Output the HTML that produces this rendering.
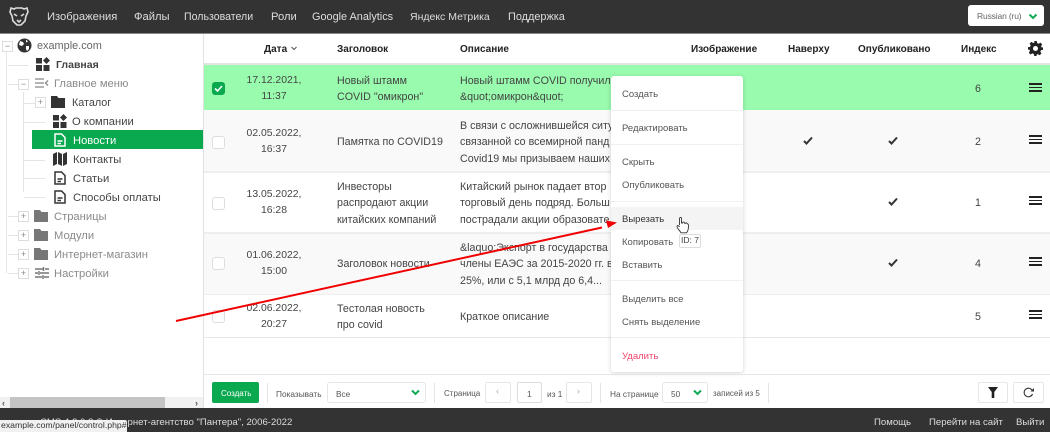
<!DOCTYPE html>
<html lang="ru"><head><meta charset="utf-8"><title>Панель</title>
<style>
html,body{margin:0;padding:0;background:#fff}
#p{position:relative;width:1050px;height:432px;overflow:hidden;background:#fff;font:11px/16px "Liberation Sans","Noto Sans CJK SC",sans-serif;color:#444}
#p div,#p span.a,#p svg{position:absolute}
.t{position:absolute;white-space:nowrap;line-height:16px}
.n{color:#ddd;font-size:11.2px;top:9px}
.h{font-weight:bold;color:#222;font-size:10px;top:42px}
.m{font-size:11.2px;color:#444}
.g{color:#8a8a8a;font-size:11.2px}
.d{font-size:10.4px;color:#444;width:80px;text-align:center;left:234px;line-height:16px;white-space:nowrap;margin-top:1px}
.c{font-size:10.7px;color:#444;white-space:nowrap;line-height:16.4px;margin-top:1px}
.cb{width:11px;height:11px;border:1px solid #ddd;border-radius:3px;background:#fff;left:212px}
.ln{background:#ddd}
.pm{width:9px;height:9px;border:1px solid #ddd;background:#fff;color:#888;font-size:9px;line-height:9px;text-align:center}
.b{height:3px;width:13px;left:1029px}
.b i{display:block;height:1.5px;background:#222;margin-bottom:2px;width:13px}
.mi{left:622px;font-size:9.5px;color:#555;white-space:nowrap;line-height:16px;margin-top:1px}
.sp{left:611px;width:132px;height:1px;background:#f0f0f0}
.sm{font-size:8.3px;color:#555;white-space:nowrap;line-height:14px;top:387px}
.bx{border:1px solid #e6e6e6;border-radius:2px;background:#fff;box-sizing:border-box}
.vs{width:1px;height:20px;top:383px;background:#e4e4e4}
</style></head><body><div id="p">

<div style="left:0;top:0;width:1050px;height:33px;background:#333"></div>
<div style="left:0;top:33px;width:1050px;height:1px;background:#888"></div>
<svg style="left:8px;top:6px" width="22" height="20" viewBox="0 0 22 20"><path d="M3 2l3 1 2-1h6l2 1 3-1 1 4-2 4-1 5-4 4h-4l-4-4-1-5-2-4z" fill="none" stroke="#ddd" stroke-width="1.6"/><path d="M6 8l3 2M16 8l-3 2M9 14l2 2 2-2" stroke="#ddd" stroke-width="1.6" fill="none"/></svg>
<span class="t n" style="left:47px">Изображения</span>
<span class="t n" style="left:134px">Файлы</span>
<span class="t n" style="left:184px;font-size:10.6px">Пользователи</span>
<span class="t n" style="left:271px">Роли</span>
<span class="t n" style="left:312px;font-size:10.9px">Google Analytics</span>
<span class="t n" style="left:410px;font-size:10.5px">Яндекс Метрика</span>
<span class="t n" style="left:508px;font-size:10.9px">Поддержка</span>
<div style="left:968px;top:5px;width:76px;height:21px;background:#fff;border-radius:3px"></div>
<span class="t" style="left:977px;top:8px;font-size:8.5px;letter-spacing:-.15px;color:#666">Russian (ru)</span>
<svg style="left:1028px;top:13px" width="10" height="7" viewBox="0 0 10 7"><path d="M1.500 1.500L5 5l3.500-3.500" stroke="#0fa958" stroke-width="2" fill="none"/></svg>

<!-- tree -->
<div style="left:203px;top:34px;width:1px;height:374px;background:#e2e2e2"></div>
<div class="ln" style="left:6px;top:52px;width:1px;height:80px;background:#e4e4e4"></div>
<div class="ln" style="left:6px;top:132px;width:1px;height:141px;background:#e4e4e4"></div>
<div class="ln" style="left:23px;top:92px;width:1px;height:100px;background:#e4e4e4"></div>
<div style="left:8px;top:65px;width:20px;height:1px;background:#e4e4e4"></div>
<div style="left:8px;top:84px;width:12px;height:1px;background:#e4e4e4"></div>
<div style="left:24px;top:103px;width:12px;height:1px;background:#e4e4e4"></div>
<div style="left:24px;top:122px;width:21px;height:1px;background:#e4e4e4"></div>
<div style="left:24px;top:160px;width:21px;height:1px;background:#e4e4e4"></div>
<div style="left:24px;top:178px;width:21px;height:1px;background:#e4e4e4"></div>
<div style="left:24px;top:197px;width:21px;height:1px;background:#e4e4e4"></div>
<div style="left:8px;top:216px;width:12px;height:1px;background:#e4e4e4"></div>
<div style="left:8px;top:235px;width:12px;height:1px;background:#e4e4e4"></div>
<div style="left:8px;top:254px;width:12px;height:1px;background:#e4e4e4"></div>
<div style="left:8px;top:273px;width:12px;height:1px;background:#e4e4e4"></div>
<div class="pm" style="left:2px;top:41px">−</div>
<div class="pm" style="left:18px;top:79px">−</div>
<div class="pm" style="left:35px;top:97px">+</div>
<div class="pm" style="left:18px;top:211px">+</div>
<div class="pm" style="left:18px;top:230px">+</div>
<div class="pm" style="left:18px;top:249px">+</div>
<div class="pm" style="left:18px;top:268px">+</div>

<svg style="left:17px;top:38px" width="15" height="15" viewBox="0 0 15 15"><circle cx="7.500" cy="7.500" r="7" fill="#333"/><path d="M3 3l3 1 1 2-2 2-3-1zM9 1.500l2 2-2 1zM9 8l3 0 0 3-2 2-1-2z" fill="#fff"/></svg>
<span class="t" style="left:37px;top:38px;font-size:10.9px;color:#666">example.com</span>

<svg style="left:36px;top:57px" width="14" height="14" viewBox="0 0 14 14" fill="#333"><path d="M0 1h6v5.500H0zM0 8h6v6H0zM7.500 8h6v6h-6zM10.500 0l3.500 3.500-3.500 3.500L7 3.500z"/></svg>
<span class="t" style="left:56px;top:57px;font-size:10.5px;font-weight:bold;color:#444">Главная</span>

<svg style="left:35px;top:77px" width="14" height="13" viewBox="0 0 14 13" stroke="#888" fill="none" stroke-width="1.300"><path d="M0 2h9M0 6h9M0 10h9M13 3.500L10.500 6l2.500 2.500"/></svg>
<span class="t g" style="left:54px;top:76px">Главное меню</span>

<svg style="left:51px;top:96px" width="14" height="12" viewBox="0 0 14 12" fill="#333"><path d="M0 0h6l1.500 2H14v10H0z"/></svg>
<span class="t m" style="left:72px;top:95px;font-size:10.8px">Каталог</span>

<svg style="left:53px;top:114px" width="14" height="14" viewBox="0 0 14 14" fill="#333"><path d="M0 1h6v5.500H0zM0 8h6v6H0zM7.500 8h6v6h-6zM10.500 0l3.500 3.500-3.500 3.500L7 3.500z"/></svg>
<span class="t m" style="left:72px;top:114px">О компании</span>

<div style="left:32px;top:130px;width:171px;height:19px;background:#0aa84f"></div>
<svg style="left:54px;top:133px" width="12" height="14" viewBox="0 0 12 14" fill="none" stroke="#fff" stroke-width="1.500"><path d="M1 1h6.500L11 4.500V13H1zM3.500 8h5M3.500 10.500h3.500"/></svg>
<span class="t m" style="left:73px;top:133px;color:#fff">Новости</span>

<svg style="left:53px;top:152px" width="14" height="14" viewBox="0 0 14 14" fill="#333"><path d="M0 2l4-2v12l-4 2zM5 0l4 2v12l-4-2zM10 2l4-2v12l-4 2z"/></svg>
<span class="t m" style="left:73px;top:152px">Контакты</span>
<svg style="left:54px;top:171px" width="12" height="14" viewBox="0 0 12 14" fill="none" stroke="#333" stroke-width="1.500"><path d="M1 1h6.500L11 4.500V13H1zM3.500 8h5M3.500 10.500h3.500"/></svg>
<span class="t m" style="left:73px;top:171px">Статьи</span>
<svg style="left:54px;top:190px" width="12" height="14" viewBox="0 0 12 14" fill="none" stroke="#333" stroke-width="1.500"><path d="M1 1h6.500L11 4.500V13H1zM3.500 8h5M3.500 10.500h3.500"/></svg>
<span class="t m" style="left:73px;top:190px">Способы оплаты</span>

<svg style="left:34px;top:210px" width="14" height="12" viewBox="0 0 14 12" fill="#777"><path d="M0 0h6l1.500 2H14v10H0z"/></svg>
<span class="t g" style="left:54px;top:209px">Страницы</span>
<svg style="left:34px;top:229px" width="14" height="12" viewBox="0 0 14 12" fill="#777"><path d="M0 0h6l1.500 2H14v10H0z"/></svg>
<span class="t g" style="left:54px;top:228px">Модули</span>
<svg style="left:34px;top:248px" width="14" height="12" viewBox="0 0 14 12" fill="#777"><path d="M0 0h6l1.500 2H14v10H0z"/></svg>
<span class="t g" style="left:54px;top:247px">Интернет-магазин</span>
<svg style="left:35px;top:266px" width="14" height="14" viewBox="0 0 14 14" stroke="#777" fill="none" stroke-width="1.400"><path d="M0 3h8M10 3h4M8.500 1v4M0 7h3M5 7h9M4 5v4M0 11h7M9 11h5M8 9v4"/></svg>
<span class="t g" style="left:54px;top:266px">Настройки</span>

<!-- scrollbar -->
<div style="left:0;top:397px;width:203px;height:11px;background:#f1f1f1"></div>
<div style="left:10px;top:397px;width:155px;height:11px;background:#c4c4c4"></div>
<span class="t" style="left:2px;top:395px;font-size:9px;font-weight:bold;color:#555">‹</span>
<span class="t" style="left:195px;top:395px;font-size:9px;font-weight:bold;color:#555">›</span>

<!-- table head -->
<div style="left:204px;top:63px;width:846px;height:2px;background:#e4e4e4"></div>
<span class="t h" style="left:264px">Дата</span>
<svg style="left:291px;top:46px" width="6" height="5" viewBox="0 0 6 5"><path d="M.5 1L3 3.500 5.500 1" stroke="#555" fill="none"/></svg>
<span class="t h" style="left:337px">Заголовок</span>
<span class="t h" style="left:460px">Описание</span>
<span class="t h" style="left:691px">Изображение</span>
<span class="t h" style="left:788px">Наверху</span>
<span class="t h" style="left:858px">Опубликовано</span>
<span class="t h" style="left:961px">Индекс</span>
<svg style="left:1028px;top:41px" width="15" height="15" viewBox="0 0 24 24" fill="#222"><path d="M10 0h4l.7 3.300 2.300 1 2.900-1.800 2.800 2.800-1.800 2.900 1 2.300L24 10v4l-3.300.7-1 2.300 1.800 2.900-2.800 2.800-2.900-1.800-2.300 1L14 24h-4l-.7-3.300-2.300-1-2.900 1.800-2.800-2.800 1.800-2.900-1-2.300L0 14v-4l3.300-.7 1-2.300-1.800-2.900 2.800-2.800 2.900 1.800 2.300-1z"/><circle cx="12" cy="12" r="4" fill="#fff"/></svg>

<!-- rows -->
<div style="left:204px;top:65px;width:846px;height:45px;background:#98fbad"></div>
<div style="left:204px;top:110px;width:846px;height:61px;background:#f9f9f9"></div>
<div style="left:204px;top:171px;width:846px;height:2px;background:#eee"></div>
<div style="left:204px;top:232px;width:846px;height:2px;background:#eee"></div>
<div style="left:204px;top:234px;width:846px;height:60px;background:#f9f9f9"></div>
<div style="left:204px;top:294px;width:846px;height:1px;background:#eee"></div>
<div style="left:204px;top:337px;width:846px;height:1px;background:#e8e8e8"></div>

<div class="cb" style="top:82px;background:#0aa84f;border-color:#0aa84f"></div>
<svg style="left:214px;top:85px" width="9" height="7" viewBox="0 0 9 7"><path d="M1 3.500L3.500 6 8 1" stroke="#fff" stroke-width="1.600" fill="none"/></svg>
<div class="cb" style="top:136px"></div>
<div class="cb" style="top:197px"></div>
<div class="cb" style="top:257px"></div>
<div class="cb" style="top:310px"></div>

<div class="t d" style="top:72px">17.12.2021,<br>11:37</div>
<div class="t d" style="top:125px">02.05.2022,<br>16:37</div>
<div class="t d" style="top:186px">13.05.2022,<br>16:28</div>
<div class="t d" style="top:247px">01.06.2022,<br>15:00</div>
<div class="t d" style="top:300px">02.06.2022,<br>20:27</div>

<div class="t c" style="left:337px;top:72px">Новый штамм<br>COVID "омикрон"</div>
<div class="t c" style="left:337px;top:133px">Памятка по COVID19</div>
<div class="t c" style="left:337px;top:178px">Инвесторы<br>распродают акции<br>китайских компаний</div>
<div class="t c" style="left:337px;top:255px">Заголовок новости</div>
<div class="t c" style="left:337px;top:300px">Тестолая новость<br>про covid</div>

<div class="t c" style="left:460px;top:72px">Новый штамм COVID получил<br>&amp;quot;омикрон&amp;quot;</div>
<div class="t c" style="left:460px;top:117px">В связи с осложнившейся ситу<br>связанной со всемирной панд<br>Covid19 мы призываем наших</div>
<div class="t c" style="left:460px;top:178px">Китайский рынок падает втор<br>торговый день подряд. Больш<br>пострадали акции образовате</div>
<div class="t c" style="left:460px;top:239px">&amp;laquo;Экспорт в государства<br>члены ЕАЭС за 2015-2020 гг. в<br>25%, или с 5,1 млрд до 6,4...</div>
<div class="t c" style="left:460px;top:308px">Краткое описание</div>

<svg style="left:803px;top:136px" width="10" height="9" viewBox="0 0 10 9"><path d="M1 5l2.500 2.500L9 1.500" stroke="#333" stroke-width="2" fill="none"/></svg>
<svg style="left:888px;top:136px" width="10" height="9" viewBox="0 0 10 9"><path d="M1 5l2.500 2.500L9 1.500" stroke="#333" stroke-width="2" fill="none"/></svg>
<svg style="left:888px;top:197px" width="10" height="9" viewBox="0 0 10 9"><path d="M1 5l2.500 2.500L9 1.500" stroke="#333" stroke-width="2" fill="none"/></svg>
<svg style="left:888px;top:258px" width="10" height="9" viewBox="0 0 10 9"><path d="M1 5l2.500 2.500L9 1.500" stroke="#333" stroke-width="2" fill="none"/></svg>

<span class="t c" style="left:975px;top:80px">6</span>
<span class="t c" style="left:975px;top:133px">2</span>
<span class="t c" style="left:975px;top:194px">1</span>
<span class="t c" style="left:975px;top:255px">4</span>
<span class="t c" style="left:975px;top:308px">5</span>

<div class="b" style="top:83px"><i></i><i></i><i></i></div>
<div class="b" style="top:135px"><i></i><i></i><i></i></div>
<div class="b" style="top:196px"><i></i><i></i><i></i></div>
<div class="b" style="top:257px"><i></i><i></i><i></i></div>
<div class="b" style="top:310px"><i></i><i></i><i></i></div>

<!-- context menu -->
<div style="left:611px;top:76px;width:132px;height:296px;background:#fff;border-radius:3px;box-shadow:0 1px 5px rgba(0,0,0,.18)"></div>
<div style="left:611px;top:207px;width:132px;height:23px;background:#f4f4f4"></div>
<div class="sp" style="top:110px"></div>
<div class="sp" style="top:144px"></div>
<div class="sp" style="top:201px"></div>
<div class="sp" style="top:280px"></div>
<div class="sp" style="top:337px"></div>
<span class="t mi" style="top:86px">Создать</span>
<span class="t mi" style="top:120px">Редактировать</span>
<span class="t mi" style="top:154px">Скрыть</span>
<span class="t mi" style="top:177px">Опубликовать</span>
<span class="t mi" style="top:211px;color:#333">Вырезать</span>
<span class="t mi" style="top:234px">Копировать</span>
<span class="t mi" style="top:257px">Вставить</span>
<span class="t mi" style="top:291px">Выделить все</span>
<span class="t mi" style="top:314px">Снять выделение</span>
<span class="t mi" style="top:348px;color:#f0476e">Удалить</span>
<div style="left:679px;top:234px;width:20px;height:12px;background:#fff;border:1px solid #ddd;border-radius:2px"></div>
<span class="t" style="left:681px;top:232px;font-size:8.500px;color:#444">ID: 7</span>
<svg style="left:676px;top:216px" width="13" height="18" viewBox="0 0 13 18"><path d="M3.500 9V2.500a1 1 0 0 1 2 0V7l1 0a1 1 0 0 1 2 .2l1 .1a1 1 0 0 1 1.800.5c1 0 1.200 1 1.200 2 0 3-1 6-2 7H5C4 15 1 12 1 10.500S3 9.500 3.500 11" fill="#fff" stroke="#333" stroke-width=".9"/></svg>

<!-- arrow -->
<svg style="left:170px;top:215px" width="460" height="110" viewBox="0 0 460 110"><path d="M6 106L432 12.500" stroke="#f00000" stroke-width="2" fill="none"/><path d="M447 7.500L436 5.500l2 7.500z" fill="#f00000"/></svg>

<!-- toolbar -->
<div style="left:204px;top:374px;width:846px;height:1px;background:#e6e6e6"></div>
<div style="left:212px;top:382px;width:47px;height:21px;background:#0aa84f;border-radius:2px"></div>
<span class="t" style="left:221px;top:386px;font-size:8px;line-height:15px;color:#fff">Создать</span>
<div class="vs" style="left:267px"></div>
<span class="t sm" style="left:276px">Показывать</span>
<div class="bx" style="left:327px;top:382px;width:99px;height:21px;border-radius:3px"></div>
<span class="t sm" style="left:336px">Все</span>
<svg style="left:411px;top:389px" width="9" height="7" viewBox="0 0 9 7"><path d="M1 1.500L4.500 5 8 1.500" stroke="#0fa958" stroke-width="2" fill="none"/></svg>
<div class="vs" style="left:434px"></div>
<span class="t sm" style="left:444px;font-size:8px">Страница</span>
<div class="bx" style="left:485px;top:382px;width:26px;height:21px"></div>
<span class="t" style="left:496px;top:385px;font-size:9px;line-height:13px;color:#aaa">‹</span>
<div class="bx" style="left:517px;top:382px;width:25px;height:21px;border-color:#ddd"></div>
<span class="t sm" style="left:527px">1</span>
<span class="t sm" style="left:547px">из 1</span>
<div class="bx" style="left:566px;top:382px;width:26px;height:21px"></div>
<span class="t" style="left:577px;top:385px;font-size:9px;line-height:13px;color:#aaa">›</span>
<div class="vs" style="left:600px"></div>
<span class="t sm" style="left:610px">На странице</span>
<div class="bx" style="left:662px;top:382px;width:46px;height:21px;border-radius:3px"></div>
<span class="t sm" style="left:671px">50</span>
<svg style="left:693px;top:389px" width="9" height="7" viewBox="0 0 9 7"><path d="M1 1.500L4.500 5 8 1.500" stroke="#0fa958" stroke-width="2" fill="none"/></svg>
<span class="t sm" style="left:713px;font-size:8px">записей из 5</span>
<div class="vs" style="left:768px"></div>
<div class="bx" style="left:978px;top:382px;width:30px;height:21px"></div>
<svg style="left:988px;top:387px" width="10" height="11" viewBox="0 0 10 11"><path d="M0 0h10L6.300 5v6H3.700V5z" fill="#222"/></svg>
<div class="bx" style="left:1013px;top:382px;width:31px;height:21px"></div>
<svg style="left:1023px;top:387px" width="11" height="11" viewBox="0 0 11 11"><path d="M9.500 4A4.300 4.300 0 1 0 9.500 7" stroke="#333" stroke-width="1.100" fill="none"/><path d="M7.500 4.500h3.500V1z" fill="#333"/></svg>

<!-- footer -->
<div style="left:0;top:408px;width:1050px;height:24px;background:#333"></div>
<span class="t" style="left:40px;top:415px;font-size:9.6px;color:#ddd">CMS 4.8.0.8 © Интернет-агентство "Пантера", 2006-2022</span>
<span class="t" style="left:874px;top:415px;font-size:9.6px;color:#ddd">Помощь</span>
<span class="t" style="left:929px;top:415px;font-size:9.6px;color:#ddd">Перейти на сайт</span>
<span class="t" style="left:1016px;top:415px;font-size:9.6px;color:#ddd">Выйти</span>
<div style="left:0;top:420px;width:127px;height:12px;background:#f1f1f1;border-top-right-radius:3px"></div>
<span class="t" style="left:1px;top:418px;font-size:8.7px;line-height:15px;color:#333">example.com/panel/control.php#</span>
</div></body></html>
